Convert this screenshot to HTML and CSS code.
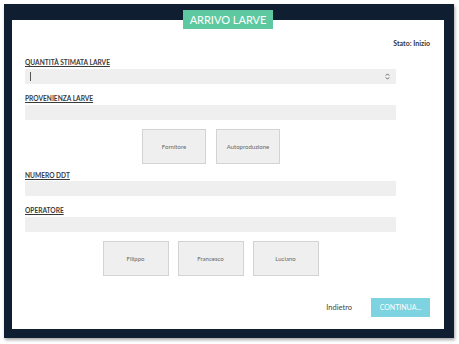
FILE: index.html
```html
<!DOCTYPE html>
<html lang="it">
<head>
<meta charset="utf-8">
<title>Arrivo larve</title>
<link rel="stylesheet" href="styles.css">
</head>
<body>
<div class="frame">
  <div class="tab">ARRIVO LARVE</div>
  <div class="panel">
    <div class="status">Stato: Inizio</div>
    <div class="form">
      <div class="label">QUANTITÀ STIMATA LARVE</div>
      <div class="input select">
        <span class="caret"></span>
        <svg class="arrows" width="5" height="7" viewBox="0 0 5 7"><path d="M0.8 2.6 L2.5 0.9 L4.2 2.6 M0.8 4.4 L2.5 6.1 L4.2 4.4" fill="none" stroke="#555" stroke-width="0.9"/></svg>
      </div>
      <div class="label">PROVENIENZA LARVE</div>
      <div class="input"></div>
      <div class="choices choices-1">
        <div class="choice">Fornitore</div>
        <div class="choice">Autoproduzione</div>
      </div>
      <div class="label label-tight">NUMERO DDT</div>
      <div class="input input-tight"></div>
      <div class="label">OPERATORE</div>
      <div class="input"></div>
      <div class="choices choices-2">
        <div class="choice wide">Filippo</div>
        <div class="choice wide">Francesco</div>
        <div class="choice wide">Luciano</div>
      </div>
    </div>
    <div class="footer">
      <span class="back">Indietro</span>
      <span class="next">CONTINUA...</span>
    </div>
  </div>
</div>
</body>
</html>
```
FILE: styles.css
```css
html, body {
  margin: 0;
  padding: 0;
  background: #ffffff;
}
body {
  font-family: Lato, "Open Sans", Arial, sans-serif;
  width: 459px;
  height: 344px;
  overflow: hidden;
}
.frame {
  position: relative;
  margin: 4px 0 0 4px;
  width: 450px;
  height: 334px;
  box-sizing: border-box;
  padding: 16px 10px 9px 8px;
  background: #0f1e30;
  box-shadow: 1px 2px 3px rgba(0, 0, 0, 0.35);
}
.tab {
  position: absolute;
  left: 179px;
  top: 6px;
  width: 90px;
  height: 19px;
  background: #5ec8a1;
  color: #ffffff;
  font-size: 11px;
  line-height: 19px;
  text-align: center;
  z-index: 2;
}
.panel {
  background: #ffffff;
  width: 432px;
  height: 309px;
  box-sizing: border-box;
  padding: 18px 14px 0 13px;
  display: flex;
  flex-direction: column;
}
.status {
  align-self: flex-end;
  font-size: 7px;
  font-weight: bold;
  color: #333;
  line-height: 10px;
  height: 10px;
}
.form {
  width: 371px;
  display: flex;
  flex-direction: column;
}
.label {
  margin-top: 9px;
  font-size: 6.6px;
  font-weight: bold;
  color: #3a3a3a;
  line-height: 10px;
  height: 10px;
  text-decoration: underline;
  text-underline-offset: 1px;
}
.label-tight {
  margin-top: 6px;
}
.input {
  position: relative;
  margin-top: 2px;
  height: 15px;
  background: #efefef;
  border-radius: 1px;
}
.input-tight {
  margin-top: 1px;
}
.caret {
  position: absolute;
  left: 5px;
  top: 3px;
  width: 1px;
  height: 9px;
  background: #555;
}
.arrows {
  position: absolute;
  right: 6px;
  top: 4px;
}
.choices {
  margin-top: 9px;
  display: flex;
  justify-content: center;
  gap: 10px;
}
.choices-1 {
  padding-left: 1px;
}
.choices-2 {
  gap: 9px;
}
.choice {
  width: 64px;
  height: 35px;
  box-sizing: border-box;
  background: #efefef;
  border: 1px solid #d3d3d3;
  color: #666;
  font-size: 6px;
  display: flex;
  align-items: center;
  justify-content: center;
}
.choice.wide {
  width: 66px;
}
.footer {
  margin-top: 22px;
  display: flex;
  justify-content: flex-end;
  align-items: center;
  gap: 19px;
}
.back {
  font-size: 7.5px;
  color: #444;
}
.next {
  width: 59px;
  height: 19px;
  background: #7dd3df;
  color: #ffffff;
  font-size: 7px;
  line-height: 19px;
  text-align: center;
}
```
